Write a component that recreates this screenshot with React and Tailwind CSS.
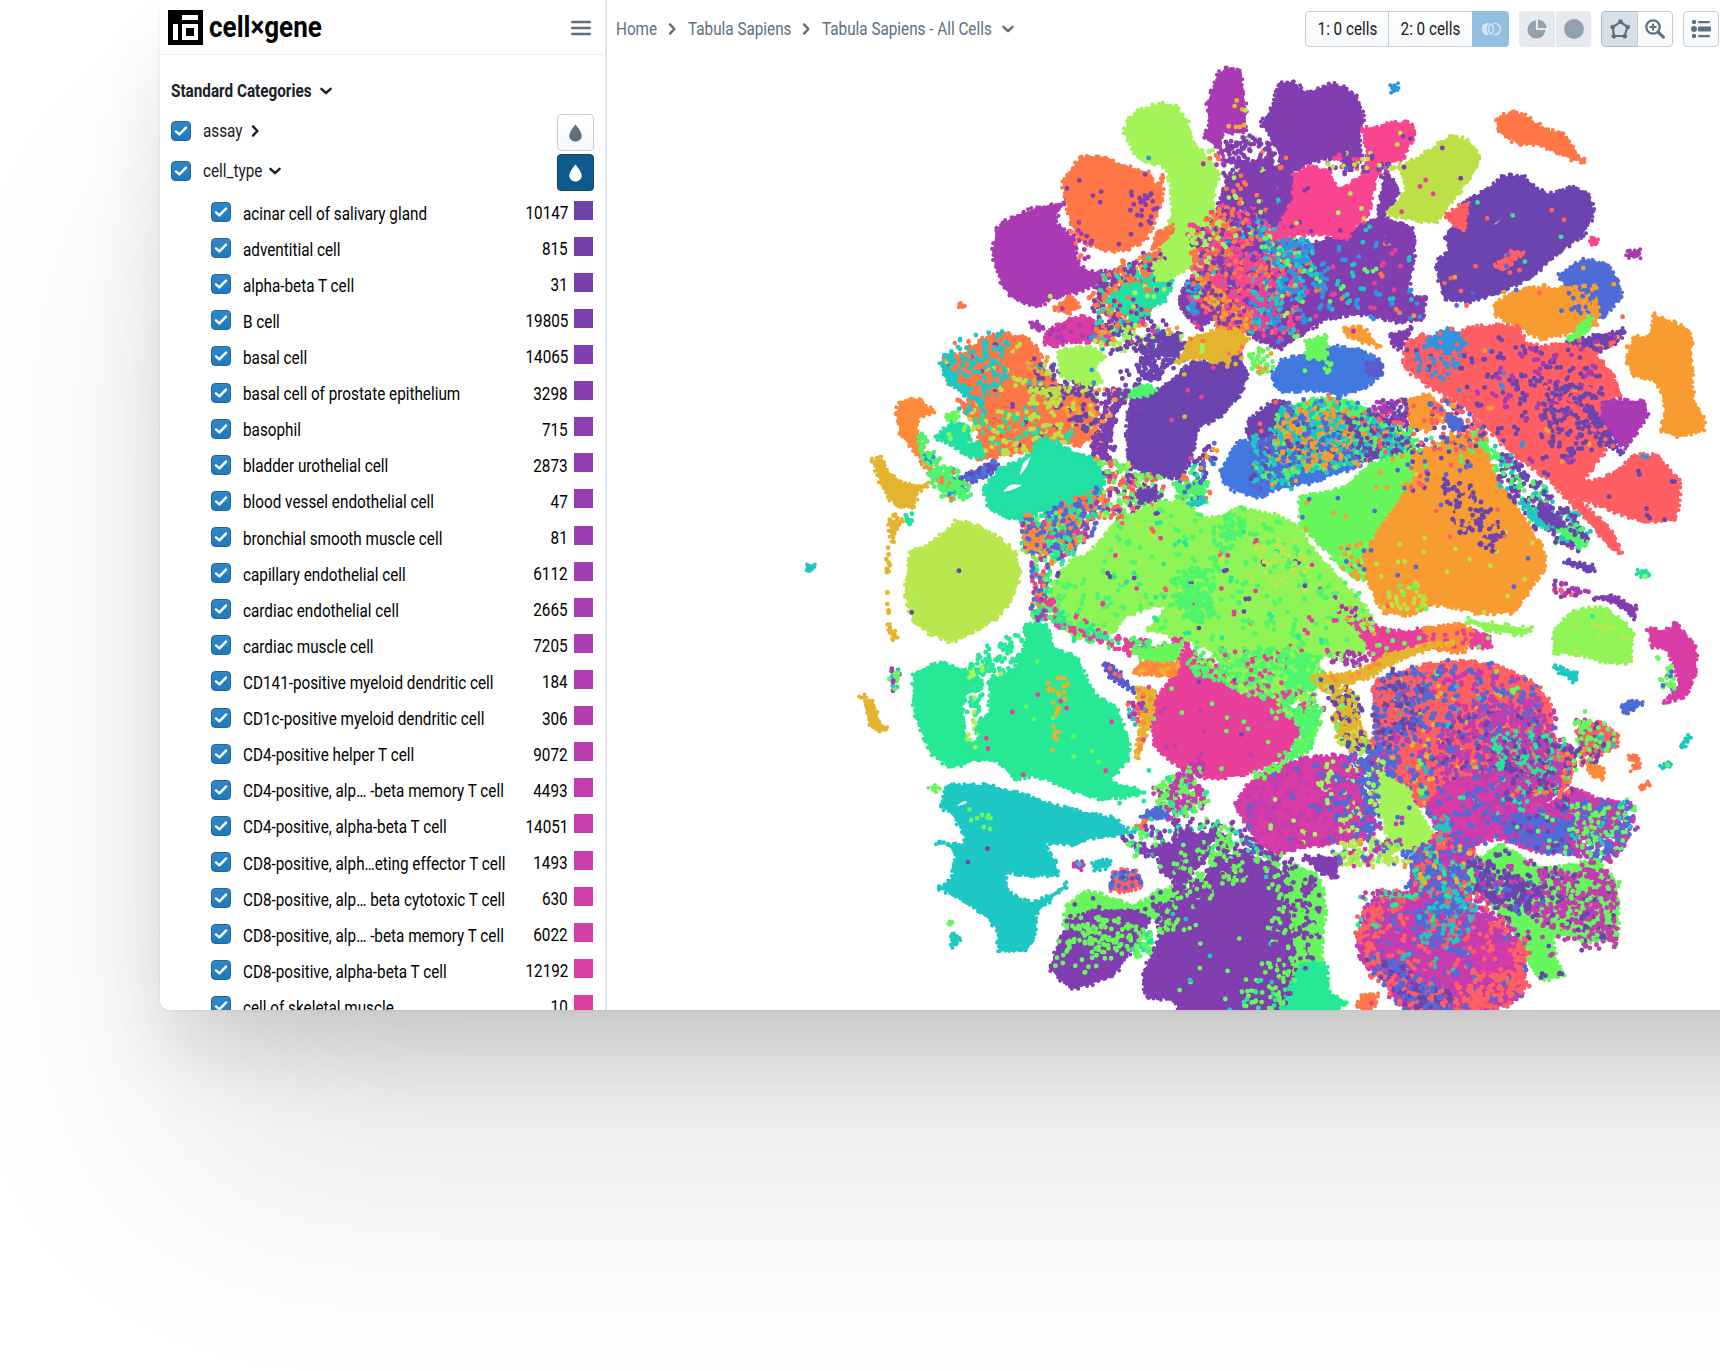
import React from "react";

const C = {
  v: "#803eb0", d: "#6b44b0", m: "#a93ab3", k: "#f94590", p: "#e8409a", f: "#c43cae", h: "#d93ca5",
  l: "#a3f459", g: "#8ff557", n: "#67f75c", q: "#4ef56c", y: "#b9e84e", c: "#bde046", o: "#f89b31", s: "#ff8a3a",
  x: "#ff7747", r: "#ff5e63", t: "#1dc7c4", e: "#26e895", w: "#20e0a3", b: "#4f6bd8", u: "#4179e0",
  i: "#2f95e0", a: "#e4b42f", j: "#5a5bcf", z: "#ffffff",
};

/* Each tile: [originX, originY, shapes]; units are thirds of a pixel.
   Shape: [base colour or "", outline, "colour+count" speckles]. */
const TILES = [
  [1280, 50, [
    ["v", "-120,340 -60,330 40,370 60,480 -60,500 -150,450", ""],
    ["v", "-5,100 40,90 80,120 150,98 190,105 235,140 255,200 245,260 250,330 210,365 165,330 90,345 30,380 -10,420 -5,330 -30,270 -60,220 -30,170", ""],
    ["v", "-120,480 -120,370 -60,380 0,400 60,580 300,500 400,540 405,640 390,730 440,740 430,810 350,820 250,800 150,810 60,860 0,900 -90,860 -170,790 -240,840 -300,780 -300,720 -250,650 -240,560 -190,490", "i70 t45 p40 n16 x16"],
    ["", "-210,480 -120,440 -40,470 40,560 70,700 30,850 -60,860 -160,800 -270,780 -260,650 -200,560", "k190 x100 v130 i70 n24 t30 l20"],
    ["", "-80,520 60,560 150,680 150,740 20,740 -60,700", "i70 t20 n14"],
    ["", "-190,600 -60,600 0,700 -80,760 -220,720", "k110 x30 v20"],
    ["", "-90,720 -10,740 0,830 -80,830", "t30 p26 i10"],
    ["x", "-250,680 -200,700 -140,760 -80,790 -110,850 -190,840 -210,760", "v30 o24 a12 k8"],
    ["k", "245,235 300,225 330,212 390,215 412,245 370,330 330,340 290,400 270,500 230,530 200,570 130,560 60,560 -20,560 30,450 40,370 90,345 150,360 180,410 240,370 260,320", "v8 l4 c4"],
    ["", "130,310 330,320 330,370 160,370", "v22 c12 b4 k16"],
    ["v", "310,370 350,390 360,430 310,520 290,500", ""],
    ["v", "310,510 400,535 400,590 320,580", ""],
    ["", "-130,250 0,300 10,480 -120,500 -170,330", "v80 l8 x6"],
    ["c", "330,350 380,335 440,300 510,255 570,270 600,320 580,380 540,430 500,480 470,520 400,515 320,490 370,420 360,370", "v3 p4"],
    ["x", "648,205 700,180 750,200 800,235 850,245 915,335 880,335 820,310 770,290 710,285 650,240", ""],
    ["d", "500,550 550,450 610,420 670,375 730,375 800,425 880,408 930,430 945,490 910,560 830,620 750,690 650,735 570,760 490,745 465,640 500,600 490,560", "r8 e4"],
    ["r", "500,500 560,460 550,540", ""], ["r", "640,650 690,600 730,610 680,660", "b2"],
    ["z", "640,525 662,508 650,520", ""],
    ["k", "925,572 945,562 955,578 940,585", ""], ["m", "1045,605 1080,603 1078,620 1045,620", ""],
    ["i", "330,108 350,103 352,120 338,126", ""],
    ["b", "835,670 910,625 980,640 1020,690 1025,740 970,805 900,760 850,710", "o6"],
    ["o", "650,750 740,710 850,710 940,730 960,780 950,830 860,855 790,870 720,840 640,795", ""],
    ["", "860,700 950,700 950,800 870,780", "b18 o18"],
    ["n", "860,870 930,800 930,830 880,885", ""],
    ["o", "1120,790 1230,840 1240,920 1245,1040 1275,1100 1270,1145 1190,1165 1140,1140 1150,1080 1125,1000 1060,980 1035,930 1060,860 1110,850", ""],
    ["d", "830,885 950,850 1035,840 1020,875 960,910 860,915", "r8 o6 m6"],
    ["r", "375,880 430,850 500,870 560,830 650,820 720,830 750,880 860,880 940,900 1000,970 1025,1040 970,1060 970,1120 980,1200 940,1260 920,1290 1000,1265 1060,1215 1130,1215 1200,1290 1200,1370 1180,1415 1090,1420 1000,1390 900,1350 850,1340 800,1290 700,1220 610,1130 530,1060 440,1010 370,950", "d40 m12 i6 o8"],
    ["", "640,900 940,920 970,1200 860,1230 700,1080", "d90 m40"],
    ["", "780,1000 920,1000 960,1160 840,1140", "d56 r40"],
    ["i", "440,870 510,828 560,880 500,920", "r4"], ["", "400,880 540,900 520,980 430,990", "i34 r10"],
    ["r", "850,1340 900,1350 1000,1440 1025,1510 990,1500 930,1430", ""],
    ["m", "970,1050 1090,1050 1105,1100 1040,1195 1000,1170 960,1110", ""],
    ["d", "920,1080 960,1100 1030,1210 970,1180", "r4"],
    ["u", "-30,980 0,930 60,910 150,885 240,895 300,930 310,975 250,1020 180,1040 100,1025 0,1030", ""],
    ["j", "260,940 300,935 305,975 265,975", ""],
    ["n", "75,870 140,855 140,920 80,930", ""],
    ["", "60,910 160,910 160,980 70,960", "n12"],
    ["o", "190,830 250,830 300,890 240,880 200,860", "m1"],
    ["v", "330,850 400,830 360,900 330,880", ""],
    ["u", "-180,1260 -120,1170 60,1180 230,1200 240,1250 100,1300 0,1320 -60,1345 -130,1330 -175,1300", ""],
    ["d", "-95,1110 -20,1050 40,1070 40,1170 -40,1190 -100,1160", "r3"],
    ["q", "-10,1090 90,1045 200,1045 300,1090 400,1180 380,1230 250,1230 150,1260 -10,1260", "t150 o60 b80 d70 x16"],
    ["", "0,1080 200,1100 230,1230 40,1260", "o90 t60 b40"],
    ["", "200,1080 400,1080 420,1230 250,1220", "d80 t34 q30 r12"],
    ["", "-90,1160 60,1160 60,1300 -90,1320", "t34 q20 b50 o12 d14"],
    ["n", "60,1340 180,1310 270,1240 400,1200 420,1290 300,1440 250,1590 190,1560 110,1480 60,1430", "o14 b8"],
    ["q", "570,1150 610,1140 640,1220 600,1230", ""],
    ["o", "400,1210 540,1150 620,1210 660,1290 730,1390 790,1490 800,1550 740,1640 700,1690 600,1695 470,1670 400,1700 310,1690 270,1620 240,1540 300,1430 360,1340 400,1280", "b8 c24 r6"],
    ["", "480,1290 580,1320 670,1440 640,1500 540,1450", "d70 o16"],
    ["", "370,1180 600,1160 560,1260 400,1330", "b12 r16 q10 d12"],
    ["", "180,1480 280,1480 250,1600 190,1560", "o20 b6 g10"],
    ["", "320,1600 420,1600 440,1680 340,1690", "c26 n8"],
    ["o", "370,1050 450,1030 500,1090 450,1140 390,1130", "r5"],
    ["", "280,1050 380,1050 380,1120 290,1110", "m24 d24 r12"],
    ["", "450,1040 600,1100 620,1180 470,1160", "r40 d14 b14 o14"],
    ["b", "500,1090 545,1110 530,1140 505,1125", ""],
    ["", "650,1190 760,1290 920,1440 890,1500 780,1430 700,1350 650,1280", "d110 t60 q46 m20"],
    ["t", "720,1350 800,1400 830,1430 770,1430", ""], ["d", "780,1360 850,1420 840,1435 780,1400", ""],
    ["", "380,800 560,640 1040,800 1100,1040 1000,880 840,860 700,800", "r4 o7 b4"],
  ]],
  [840, 50, [
    ["m", "1130,70 1165,50 1205,65 1215,120 1222,180 1220,245 1185,255 1150,250 1155,340 1130,300 1085,260 1100,230 1098,160", "a7 l1"],
    ["", "1150,270 1260,270 1320,400 1280,430 1170,350", "v50"],
    ["v", "1160,380 1210,360 1270,400 1260,460 1200,480 1130,480", "x12 l6"],
    ["l", "860,205 900,175 960,155 1010,165 1045,210 1062,270 1090,300 1140,370 1125,440 1130,500 1165,540 1100,530 1080,600 1050,650 1010,680 960,700 940,650 960,560 985,510 990,440 975,360 920,340 880,310 850,250", "i2"],
    ["", "1050,290 1130,300 1140,350 1080,350", "l14 x4 m3"],
    ["", "1110,480 1200,470 1170,600 1050,680 1040,560", "x50 v40 k40 l24"],
    ["m", "470,530 520,495 600,465 680,455 650,510 700,560 720,640 760,660 830,660 790,700 720,730 650,745 590,775 530,755 490,720 460,650 455,590", "l1"],
    ["x", "720,320 780,315 850,340 930,365 950,400 972,370 970,450 950,510 920,570 860,605 790,605 730,580 690,530 672,450 665,390", "v12"],
    ["", "870,420 960,430 930,540 860,500", "v20"],
    ["", "680,490 740,530 760,650 700,600", "m18 x5"],
    ["x", "930,590 950,540 1000,530 990,560 950,595", ""],
    ["x", "645,775 690,740 715,770 680,790", "m1"], ["x", "358,765 370,762 372,772 360,773", ""],
    ["m", "570,815 600,820 610,840 580,835", ""],
    ["h", "610,880 620,840 690,800 750,800 830,850 780,880 700,880 640,895", "m14"],
    ["", "760,720 800,690 850,640 940,610 980,640 960,740 900,820 830,860 780,880", "v190 x160 w60 o30"],
    ["w", "800,750 860,700 920,690 950,650 1000,690 980,750 900,800 850,790", "v12 x8 l8"],
    ["l", "945,640 990,640 985,690 950,690", ""],
    ["", "760,860 930,800 1040,860 1040,930 900,900 800,900", "l40 d40 o10 i8 p6"],
    ["x", "310,920 370,905 430,860 480,845 560,860 600,900 620,960 680,1010 740,1010 780,1070 770,1150 720,1190 650,1175 560,1210 470,1225 410,1230 410,1150 370,1080 380,1035 320,1000", "c34 v24 t24"],
    ["t", "305,935 380,990 385,1040 320,1000", ""],
    ["", "320,900 500,850 490,1010 370,1100 370,1030", "t90 x50"],
    ["", "560,940 640,930 780,1010 770,1140 640,1080 580,1020", "d90 c20 o20"],
    ["", "560,1010 660,1010 650,1070 590,1070", "c44"],
    ["", "390,1110 560,1080 720,1160 520,1220 430,1180", "c50 w30 x30"],
    ["l", "655,900 720,885 760,890 800,920 770,950 785,1000 740,1005 660,980", "i2"],
    ["", "910,870 980,850 1040,880 990,950 940,990 900,970", "d140"],
    ["", "840,960 920,940 940,1010 860,1010", "d14"],
    ["d", "870,1040 940,1020 1010,970 1060,930 1130,930 1200,910 1225,980 1200,1040 1150,1100 1080,1140 1060,1220 1020,1285 930,1280 870,1250 855,1170", "p5 v8 a2"],
    ["q", "845,1030 920,1005 945,1020 920,1035 850,1045", ""],
    ["a", "1050,860 1120,840 1190,840 1230,870 1200,910 1130,940 1070,930 1010,940", "x5 l4"],
    ["", "1140,930 1210,910 1190,960 1150,960", "a8"],
    ["", "800,1020 860,1020 830,1080 820,1160 800,1230 750,1210 790,1100", "v110 o16 d20"],
    ["", "1230,900 1290,890 1300,960 1240,970", "n34 o6"],
    ["s", "165,1090 180,1050 240,1045 285,1090 240,1110 240,1150 270,1230 310,1310 275,1290 230,1220 180,1160", ""],
    ["a", "95,1230 125,1220 150,1260 185,1290 265,1305 240,1330 220,1375 165,1370 120,1310", ""],
    ["w", "285,1160 340,1110 390,1130 400,1190 380,1210 330,1190", "g6"],
    ["n", "315,1090 350,1090 350,1110 320,1105", ""],
    ["w", "360,1190 420,1180 430,1220 380,1215", ""],
    ["", "240,1160 290,1240 350,1260 390,1330 340,1345 290,1310 250,1220", "q130 i12 x8"],
    ["j", "360,1280 460,1230 480,1260 400,1300", "u10 d6"],
    ["w", "430,1310 480,1250 560,1215 600,1160 640,1170 700,1200 760,1220 800,1280 780,1340 700,1390 650,1400 600,1390 560,1420 480,1400 440,1370", ""],
    ["z", "540,1275 550,1240 572,1220 560,1250", ""], ["z", "490,1325 510,1305 545,1305 520,1318", ""],
    ["", "640,1380 760,1320 800,1350 780,1420 700,1480 620,1460", "b60 x44 w20 m16 s20"],
    ["", "560,1440 700,1400 720,1500 600,1520", "b34 s34 x10"],
    ["", "790,1230 940,1270 980,1400 850,1440 790,1380", "r60 v50 n80 l20"],
    ["d", "890,1320 950,1310 950,1350 900,1360", ""],
    ["", "1000,1310 1080,1270 1110,1320 1080,1370 1010,1350", "q60 b8 x6"],
    ["", "1060,1240 1130,1160 1130,1240 1080,1300", "d20 b12 o8 w6"],
    ["t", "950,1370 1095,1345 1090,1365 1000,1395", ""],
    ["", "140,1390 190,1400 170,1430 150,1430", "a8"], ["", "190,1390 220,1380 215,1430", "w9"],
    ["", "860,1430 1000,1380 1060,1420 900,1500", "n44 l20 v8 p6"],
  ]],
  [780, 520, [
    ["t", "78,135 100,133 100,147 82,148", ""],
    ["a", "330,10 370,0 345,40 340,70 333,50", ""],
    ["", "318,80 330,90 326,290 318,290", "a12"],
    ["a", "325,310 350,350 340,358 325,330", ""],
    ["y", "390,90 460,60 530,0 580,10 660,50 710,100 725,160 700,240 650,300 570,345 520,370 460,350 400,310 370,220 380,140", "d2 l1"],
    ["", "330,440 370,440 350,510 330,510", "n10 m6 t6"],
    ["a", "243,525 285,545 300,600 325,630 300,637 265,615", ""],
    ["e", "400,460 480,425 590,460 560,540 550,590 570,660 620,710 520,745 450,700 400,580", ""],
    ["e", "740,310 800,310 830,380 890,410 950,520 1010,560 1050,660 1050,720 1000,780 1070,800 1070,830 960,840 880,820 770,775 700,780 650,730 590,720 590,600 620,580 630,480 700,440 730,370", "p9 n8"],
    ["", "540,460 740,320 720,470 600,500 620,720 550,700 570,560", "e120 l16"],
    ["", "790,470 870,480 850,560 830,690 810,690 820,560", "a26"],
    ["", "740,0 900,-20 890,80 800,160 810,300 750,300 760,130 730,60", "s40 b60 e80 n50 m24 p24"],
    ["s", "725,30 800,30 780,90 740,90", "b8"],
    ["g", "800,240 820,180 870,120 930,90 1000,10 1090,-40 1200,-60 1290,-10 1380,-40 1500,-15 1560,20 1600,80 1680,170 1780,290 1750,400 1620,420 1600,510 1500,560 1380,500 1300,400 1200,360 1100,330 1150,260 1050,290 1000,340 900,360 830,310", "q190 e24 p22 d12 r8 y24"],
    ["", "1180,150 1280,150 1300,300 1210,290", "q100"],
    ["", "1350,-20 1290,60 1340,90 1400,20", "q50"],
    ["", "1420,80 1560,60 1590,160 1480,200", "y50"],
    ["", "800,200 860,300 1000,350 1200,370 1180,410 1050,390 900,350 800,290", "p70 q60 e20"],
    ["n", "1060,390 1210,370 1180,430 1100,430", ""],
    ["p", "1110,560 1170,470 1220,370 1270,420 1400,480 1520,560 1560,640 1510,720 1400,765 1290,780 1190,740 1120,680", "n14 f8 v3"],
    ["", "1230,410 1560,390 1630,500 1590,640 1500,570 1380,520 1250,460", "q240 p70 g90"],
    ["q", "1520,400 1620,410 1600,510 1530,500", "g10"],
    ["", "1560,560 1610,600 1590,670 1500,740 1560,660", "q80 n30"],
    ["s", "1055,455 1080,425 1200,430 1180,470 1070,468", "a8"],
    ["j", "970,430 1000,430 1065,510 1060,520 985,475", "r3"],
    ["a", "1065,500 1130,510 1110,620 1075,720 1065,690 1080,600", "s8 p4"],
    ["", "1040,550 1090,550 1080,620 1050,600", "t8 r8 m12"],
    ["", "1130,790 1220,760 1280,830 1240,890 1140,880", "f80 n70 e16"],
    ["b", "1085,890 1130,860 1160,885 1110,900", ""], ["x", "1060,925 1100,900 1090,925 1065,932", ""],
    ["", "1180,780 1260,700 1270,760 1220,790", "f30 n6"],
    ["t", "500,795 620,790 720,815 860,860 1000,890 1055,940 1000,955 930,960 880,980 800,975 830,1020 830,1070 720,1070 680,1060 700,1120 760,1140 860,1095 820,1140 770,1190 775,1230 740,1295 655,1295 640,1220 540,1140 470,1105 510,1070 520,1000 470,965 550,965 515,890 480,860", "v2"],
    ["z", "530,858 555,842 560,850", ""],
    ["", "560,850 640,850 640,930 590,930", "n9"],
    ["n", "450,800 475,800 470,812", ""], ["t", "512,1260 525,1240 538,1260 520,1280", ""], ["n", "508,1208 514,1208 512,1214", ""],
    ["t", "940,1030 990,1020 980,1040 945,1048", ""], ["f", "880,1035 910,1025 905,1048 885,1045", "t2"],
    ["r", "1000,1050 1070,1050 1090,1100 1030,1120 985,1110", "b22 t4 d5"],
    ["", "1040,940 1280,900 1500,1000 1470,1050 1250,1000 1080,1010", "v110 n70 e24 t8"],
    ["n", "850,1220 860,1150 930,1110 1060,1150 1130,1110 1210,1090 1220,1120 1130,1200 1060,1180 930,1190", "v10"],
    ["v", "870,1200 930,1170 1060,1165 1110,1200 1060,1290 1000,1370 880,1410 810,1350 830,1270", "n20"],
    ["", "860,1220 1080,1200 1020,1300 870,1300", "n66"],
    ["", "1060,1260 1100,1210 1130,1290 1070,1310", "n30 e14"],
    ["v", "1080,990 1190,960 1200,925 1290,950 1270,1030 1200,1085 1140,1060 1130,1010", "n4"],
    ["n", "1510,1040 1610,1060 1640,1150 1630,1300 1650,1410 1700,1450 1650,1480 1480,1480 1500,1300", "v50"],
    ["v", "1140,1160 1260,1080 1320,1000 1420,1010 1500,1050 1530,1180 1540,1300 1500,1480 1210,1480 1180,1445 1100,1435 1085,1360 1130,1260", "n12 t8"],
    ["", "1260,940 1420,980 1560,1060 1330,1100 1180,1250 1110,1190", "n90 v90"],
    ["e", "1560,1330 1640,1330 1650,1410 1700,1450 1640,1480 1500,1480", ""],
    ["", "1480,1060 1600,1080 1620,1200 1580,1340 1500,1470 1460,1470", "v70 n60"],
    ["", "1380,1380 1520,1380 1500,1470 1380,1460", "n20 e10"],
    ["", "1000,860 1120,780 1080,700 1120,960", "e10"],
    ["", "1390,900 1340,900 1400,990 1500,1020 1480,990", "v24 b8 e6"],
  ]],
  [1220, 520, [
    ["h", "45,860 80,790 150,740 270,710 380,710 440,830 430,960 300,980 170,1000 100,950", "f180 b16 l8"],
    ["", "280,720 440,730 450,960 380,960", "l34 b34 f20"],
    ["", "100,760 200,715 200,735 130,780", "n20"],
    ["p", "380,290 450,310 540,330 620,320 760,330 815,350 810,390 720,380 600,380 530,400 460,430 430,360", "n14"],
    ["s", "610,320 720,310 760,330 730,400 640,390 620,350", "p14"],
    ["a", "300,460 400,450 500,400 620,370 700,370 540,425 440,480 350,500 310,490", "s8"],
    ["g", "740,300 830,307 935,325 905,348 800,335", ""],
    ["", "330,230 450,290 460,340 380,300", "g30 m14 o6"],
    ["", "330,390 440,400 420,440 340,430", "m30 g8"],
    ["", "270,480 400,520 420,620 460,700 380,680 340,600 340,530", "a130 n30 d60 c30"],
    ["r", "460,490 550,450 640,425 750,420 850,440 950,490 995,550 1000,640 1060,720 1050,790 960,850 830,860 700,860 600,860 520,820 440,740 460,620", "b330 f120 a90 n20 t20 r60"],
    ["", "460,490 620,440 620,600 480,700", "d60 b50 r50"],
    ["", "720,560 980,540 1040,800 900,860 700,800 640,720", "f300 d60 b40 r50"],
    ["", "820,640 1000,640 980,780 850,760", "e90 f50"],
    ["h", "620,850 700,780 860,760 960,850 1060,800 1130,830 1200,850 1150,930 960,1000 830,960 700,1010 640,920", "b110 f130 e20"],
    ["", "850,660 1060,680 1060,860 850,860", "e30 f80 d60 x12"],
    ["", "390,700 500,690 520,800 480,900 440,960 430,800", "b170 f30 l24 d10"],
    ["b", "820,890 960,880 1060,920 1080,1000 960,1000 860,940", "f30 d20 n10"],
    ["", "1060,850 1230,850 1245,930 1200,1000 1150,1020 1060,1010", "f130 b130 n80 t10"],
    ["l", "480,760 560,800 600,870 650,960 590,985 510,980 480,870", "b3 f3"],
    ["", "450,780 500,780 500,900 450,880", "l16"],
    ["", "640,890 690,900 680,990 640,960", "t30 r10"],
    ["", "400,960 620,980 640,1020 540,1030 400,1040 300,1060", "y60 l30 f30 b20 n14 o6"],
    ["v", "250,1010 350,1010 350,1080 300,1060", ""],
    ["f", "580,1000 640,960 760,980 770,1110 700,1160 570,1110", "b90 a20 t24 e24 r30"],
    ["n", "780,1010 840,970 900,1000 980,1040 1130,1020 1190,1090 1200,1170 1190,1260 1100,1270 1010,1250 1010,1300 1030,1370 960,1380 900,1300 860,1210 780,1130 740,1050", "f50 d30"],
    ["", "960,1050 1190,1080 1190,1260 1090,1270 940,1200", "f200 d40 n60"],
    ["", "740,1020 850,1050 960,1110 960,1180 860,1160 780,1130", "d130 f30 b20"],
    ["f", "460,1130 540,1110 620,1130 750,1170 830,1210 900,1260 915,1330 910,1430 800,1475 560,1475 500,1400 430,1330 410,1240", "r110 b100 t20 f60"],
    ["", "740,1120 800,1150 900,1260 860,1290 740,1200", "f50 r20"],
    ["", "600,1100 760,1150 740,1260 600,1260", "t50 b70 r30 e10 f20"],
    ["", "410,1230 460,1140 560,1120 480,1200 470,1380 430,1330", "r70 e10 f20"],
    ["", "440,1310 600,1370 720,1470 570,1475 500,1400", "b70 d60 r50"],
    ["", "740,1380 920,1260 910,1430 800,1475 700,1470", "r130"],
    ["h", "740,1280 860,1270 880,1340 800,1360", "f20 r10"],
    ["", "410,1120 560,1110 600,1130 460,1150", "e12 f14"],
    ["x", "415,1460 425,1430 470,1425 465,1450 440,1480", "p1"],
    ["g", "1000,330 1060,270 1150,260 1240,330 1230,430 1150,430 1080,410 1000,400", "y14 e1"],
    ["v", "1120,235 1180,225 1250,260 1245,300 1190,260", ""],
    ["h", "1285,325 1340,325 1370,305 1430,380 1430,460 1400,530 1330,550 1370,490 1340,400 1290,380", ""],
    ["", "1310,410 1350,410 1370,520 1330,510", "n16 b5"],
    ["r", "1070,630 1140,600 1195,640 1190,685 1130,710 1080,690", "n16 d8 t6"],
    ["", "1060,600 1110,600 1100,680 1065,680", "n18 f8"],
    ["", "1010,680 1130,690 1140,740 1050,740", "d34 r16 s10"],
    ["s", "1100,735 1145,740 1150,775 1120,770", ""],
    ["b", "1205,560 1230,540 1265,550 1240,570 1210,580", ""],
    ["x", "1225,710 1250,710 1260,740 1235,750 1245,730", ""], ["x", "1262,800 1288,785 1285,795 1268,805", ""],
    ["t", "1380,675 1405,648 1408,655 1388,680", ""], ["t", "1322,740 1350,728 1348,742 1330,745", "n1"],
    ["t", "1000,437 1070,460 1065,485 1020,455", ""], ["w", "1250,158 1275,148 1292,162 1275,172", "l1"],
    ["d", "1040,120 1120,140 1115,155 1045,130", ""], ["q", "1010,30 1060,20 1100,75 1080,85 1030,50", "d3"],
    ["", "990,180 1110,210 1040,235 1000,220", "m16 r6 v8"],
    ["", "1020,610 1060,560 1220,610 1050,780", "n12"],
  ]],
];

function rng(seed) {
  let s = seed >>> 0;
  return () => {
    s = (s + 0x6d2b79f5) >>> 0;
    let t = Math.imul(s ^ (s >>> 15), 1 | s);
    t = (t + Math.imul(t ^ (t >>> 7), 61 | t)) ^ t;
    return ((t ^ (t >>> 14)) >>> 0) / 4294967296;
  };
}

/* Closed cardinal-spline outline, sampled densely and inset along its normal. */
function smooth(pts, inset) {
  const out = [];
  const n = pts.length;
  const s = 0.32;
  let area = 0;
  for (let i = 0; i < n; i++) {
    const q = pts[(i + 1) % n];
    area += pts[i][0] * q[1] - q[0] * pts[i][1];
  }
  const amount = Math.abs(area) < 500 ? 0 : inset;
  for (let i = 0; i < n; i++) {
    const [a, b, c, d] = [pts[(i + n - 1) % n], pts[i], pts[(i + 1) % n], pts[(i + 2) % n]];
    const len = Math.hypot(c[0] - b[0], c[1] - b[1]) || 1;
    const nx = ((b[1] - c[1]) / len) * Math.sign(area) * amount;
    const ny = ((c[0] - b[0]) / len) * Math.sign(area) * amount;
    const steps = Math.max(2, Math.round(len / 3));
    for (let k = 0; k < steps; k++) {
      const t = k / steps;
      const [t2, t3] = [t * t, t * t * t];
      const at = (j) =>
        (2 * t3 - 3 * t2 + 1) * b[j] + (t3 - 2 * t2 + t) * s * (c[j] - a[j]) + (3 * t2 - 2 * t3) * c[j] + (t3 - t2) * s * (d[j] - b[j]);
      out.push([at(0) + nx, at(1) + ny]);
    }
  }
  return out;
}

function inside(x, y, poly) {
  let hit = false;
  for (let i = 0, j = poly.length - 1; i < poly.length; j = i++) {
    const [xi, yi] = poly[i];
    const [xj, yj] = poly[j];
    if (yi > y !== yj > y && x < ((xj - xi) * (y - yi)) / (yj - yi) + xi) hit = !hit;
  }
  return hit;
}

const f1 = (v) => v.toFixed(1);

function buildLayers() {
  const layers = [];
  const rand = rng(20240);
  for (const [ox, oy, shapes] of TILES) {
    for (const [base, outline, speckle] of shapes) {
      const raw = outline.split(" ").map((p) => {
        const [x, y] = p.split(",").map(Number);
        return [ox + x / 3, oy + y / 3];
      });
      const poly = smooth(raw, base ? 2 : 0);
      if (base) {
        let dots = "";
        if (base !== "z") {
          for (const [x, y] of poly) dots += `M${f1(x + (rand() - 0.5) * 3.4)} ${f1(y + (rand() - 0.5) * 3.4)}h0`;
        }
        layers.push({ fill: C[base], d: "M" + poly.map((p) => f1(p[0]) + " " + f1(p[1])).join("L") + "Z", dots, w: 4 });
      }
      if (speckle) {
        const xs = raw.map((p) => p[0]);
        const ys = raw.map((p) => p[1]);
        const [x0, x1, y0, y1] = [Math.min(...xs), Math.max(...xs), Math.min(...ys), Math.max(...ys)];
        const bag = [];
        for (const part of speckle.split(" ")) for (let i = 0; i < +part.slice(1); i++) bag.push(part[0]);
        for (let i = bag.length - 1; i > 0; i--) {
          const j = Math.floor(rand() * (i + 1));
          [bag[i], bag[j]] = [bag[j], bag[i]];
        }
        const dense = bag.length > 60;
        const spread = dense ? 8 : 2;
        const groups = [];
        bag.forEach((col, idx) => {
          const slot = Math.floor((idx * 4) / bag.length);
          for (let tries = 0; tries < 40; tries++) {
            const x = x0 + rand() * (x1 - x0);
            const y = y0 + rand() * (y1 - y0);
            if (inside(x, y, poly)) {
              const key = slot + col;
              let g = groups.find((q) => q.key === key);
              if (!g) groups.push((g = { key, col, dots: "" }));
              const [px, py] = [x + (rand() - 0.5) * spread, y + (rand() - 0.5) * spread];
              g.dots += `M${f1(px)} ${f1(py)}h0`;
              if (dense && rand() < 0.55) g.dots += `M${f1(px + (rand() - 0.5) * 8)} ${f1(py + (rand() - 0.5) * 8)}h0`;
              break;
            }
          }
        });
        groups.sort((a, b) => (a.key[0] < b.key[0] ? -1 : a.key[0] > b.key[0] ? 1 : 0));
        for (const g of groups) layers.push({ fill: C[g.col], dots: g.dots, w: 4.9 });
      }
    }
  }
  return layers;
}

const LAYERS = buildLayers();

function Scatter() {
  return (
    <svg className="block h-[954px] w-[1113px]" viewBox="607 56 1113 954">
      {LAYERS.map((l, i) => (
        <g key={i}>
          {l.d && <path d={l.d} fill={l.fill} />}
          {l.dots && <path d={l.dots} fill="none" stroke={l.fill} strokeWidth={l.w} strokeLinecap="round" />}
        </g>
      ))}
    </svg>
  );
}

/* Cyclical rainbow in cubehelix space. */
function rainbow(t) {
  const ts = Math.abs(t - 0.5);
  const h = ((360 * t - 100 + 120) * Math.PI) / 180;
  const s = 1.5 - 1.5 * ts;
  const l = 0.8 - 0.9 * ts;
  const a = s * l * (1 - l);
  const [c, n] = [Math.cos(h), Math.sin(h)];
  const ch = (p, q) => Math.round(255 * Math.max(0, Math.min(1, l + a * (p * c + q * n))));
  return `rgb(${ch(-0.14861, 1.78277)}, ${ch(-0.29227, -0.90649)}, ${ch(1.97294, 0)})`;
}

const CELLS = [
  ["acinar cell of salivary gland", 10147], ["adventitial cell", 815], ["alpha-beta T cell", 31], ["B cell", 19805],
  ["basal cell", 14065], ["basal cell of prostate epithelium", 3298], ["basophil", 715], ["bladder urothelial cell", 2873],
  ["blood vessel endothelial cell", 47], ["bronchial smooth muscle cell", 81], ["capillary endothelial cell", 6112],
  ["cardiac endothelial cell", 2665], ["cardiac muscle cell", 7205], ["CD141-positive myeloid dendritic cell", 184],
  ["CD1c-positive myeloid dendritic cell", 306], ["CD4-positive helper T cell", 9072],
  ["CD4-positive, alp… -beta memory T cell", 4493], ["CD4-positive, alpha-beta T cell", 14051],
  ["CD8-positive, alph…eting effector T cell", 1493], ["CD8-positive, alp… beta cytotoxic T cell", 630],
  ["CD8-positive, alp… -beta memory T cell", 6022], ["CD8-positive, alpha-beta T cell", 12192], ["cell of skeletal muscle", 10],
];

const ORIGIN = { left: "origin-left", right: "origin-right", center: "origin-center" };

function Cond({ children, className = "", from = "left" }) {
  return (
    <span className={`inline-block scale-x-[0.868] whitespace-nowrap ${ORIGIN[from]} ${className}`}>
      {children}
    </span>
  );
}

function Check({ className = "" }) {
  return (
    <span className={`flex size-[20px] shrink-0 items-center justify-center rounded-[4px] border border-[#2a6591] bg-linear-to-b from-[#3187c6] to-[#1b7abd] ${className}`}>
      <svg className="size-[18px]" viewBox="0 0 18 18" fill="none" stroke="#fff" strokeWidth="2.4" strokeLinecap="round" strokeLinejoin="round">
        <path d="M4 9.4L7.4 12.4L14 5.6" />
      </svg>
    </span>
  );
}

function Chevron({ dir = "down", className = "" }) {
  return (
    <svg className={`size-[12px] shrink-0 ${className}`} viewBox="0 0 12 12" fill="none" stroke="currentColor" strokeWidth="2.4" strokeLinecap="round" strokeLinejoin="round">
      <path d={dir === "down" ? "M1.4 3.8L6 8.2L10.6 3.8" : "M4 1.4L8.4 6L4 10.6"} />
    </svg>
  );
}

function Drop({ active }) {
  return (
    <span className={`flex size-[37px] items-center justify-center rounded-[4px] border ${active ? "border-[#0d456d] bg-[#0e5a8a] text-white" : "border-[#c8ccd0] bg-linear-to-b from-white to-[#f5f8fa] text-[#5c7080]"}`}>
      <svg className="h-[18px] w-[13px]" viewBox="0 0 13 18" fill="currentColor">
        <path d="M6.5 0.5C6.5 0.5 0.3 7.6 0.3 11.5C0.3 15 3 17.5 6.5 17.5S12.7 15 12.7 11.5C12.7 7.6 6.5 0.5 6.5 0.5Z" />
      </svg>
    </span>
  );
}

function Sidebar() {
  return (
    <aside className="flex h-[1010px] w-[447px] shrink-0 flex-col overflow-hidden rounded-bl-[10px] border-r-2 border-[#dfe5ea] bg-white">
      <div className="flex h-[55px] shrink-0 items-center border-b border-[#eef0f2] pr-[14px] pl-[8px]">
        <svg className="mt-px size-[35px]" viewBox="0 0 35 35">
          <rect width="35" height="35" />
          <g fill="#fff">
            <rect x="14" y="5" width="16" height="5" />
            <rect x="5" y="14" width="5" height="16" />
            <path fillRule="evenodd" d="M14 14H30V30H14ZM18 18V26H26V18Z" />
          </g>
        </svg>
        <Cond className="ml-[6px] text-[30px] leading-[30px] font-bold text-black">cell×gene</Cond>
        <svg className="ml-auto h-[18px] w-[20px]" viewBox="0 0 20 18" stroke="#5c7080" strokeWidth="2.4" strokeLinecap="round">
          <path d="M1.2 4H18.8M1.2 10H18.8M1.2 16H18.8" />
        </svg>
      </div>
      <div className="mt-[24px] flex h-[23px] shrink-0 items-center pl-[11px] font-bold text-[#182026]">
        <Cond className="w-[149px]">Standard Categories</Cond>
        <Chevron className="mt-px" />
      </div>
      <div className="mt-[12px] flex h-[37px] shrink-0 items-center pr-[11px] pl-[11px]">
        <Check className="mb-[4px]" />
        <Cond className="mb-[4px] ml-[12px] w-[46px]">assay</Cond>
        <Chevron dir="right" className="mb-[4px]" />
        <span className="ml-auto"><Drop /></span>
      </div>
      <div className="mt-[3px] flex h-[37px] shrink-0 items-center pr-[11px] pl-[11px]">
        <Check className="mb-[4px]" />
        <Cond className="mb-[4px] ml-[12px] w-[66px]">cell_type</Cond>
        <Chevron className="mb-[4px]" />
        <span className="ml-auto"><Drop active /></span>
      </div>
      <div className="mt-[3px] shrink-0">
        {CELLS.map(([name, count], i) => (
          <div key={i} className="flex h-[36.12px] items-center pr-[12px] pl-[51px] text-black">
            <Check />
            <Cond className="ml-[12px] w-[262px] shrink-0 pt-[3px]">{name}</Cond>
            <span className="flex min-w-0 flex-1 justify-end">
              <Cond from="right" className="pt-[2px]">{count}</Cond>
            </span>
            <span className="mb-[4px] ml-[6px] size-[19px] shrink-0" style={{ background: rainbow(i * 0.0064) }} />
          </div>
        ))}
      </div>
    </aside>
  );
}

function Topbar() {
  const btn = "flex h-[36px] items-center justify-center border border-[#c8ccd0] bg-linear-to-b from-white to-[#f7f9fa]";
  return (
    <div className="flex h-[56px] shrink-0 items-start text-[#5c7080]">
      <nav className="flex h-[58px] items-center pl-[9px]">
        <Cond className="w-[50px]">Home</Cond>
        <Chevron dir="right" className="mr-[10px]" />
        <Cond className="w-[112px]">Tabula Sapiens</Cond>
        <Chevron dir="right" className="mr-[10px]" />
        <Cond className="w-[180px]">Tabula Sapiens - All Cells</Cond>
        <Chevron />
      </nav>
      <div className="mt-[11px] ml-auto flex">
        <div className="flex text-[#182026]">
          <span className={`${btn} w-[84px] rounded-l-[4px]`}><Cond from="center">1: 0 cells</Cond></span>
          <span className={`${btn} -ml-px w-[85px]`}><Cond from="center">2: 0 cells</Cond></span>
          <span className="-ml-px flex h-[36px] w-[37px] items-center justify-center rounded-r-[4px] bg-[#93bfe0]">
            <svg className="h-[14px] w-[20px]" viewBox="0 0 20 14" fill="none" stroke="#d3e5f3" strokeWidth="1.6">
              <path d="M8 1.4C5 0 0.8 2.4 0.8 7S5 14 8 12.6C5 9.5 5 4.5 8 1.4Z" fill="#d3e5f3" stroke="none" />
              <path d="M10 1.8C6.6 4.6 6.6 9.4 10 12.2C13.4 9.4 13.4 4.6 10 1.8Z" />
              <path d="M12.4 1.4C15.6 0.6 19.2 3 19.2 7S15.6 13.4 12.4 12.6" />
            </svg>
          </span>
        </div>
        <div className="ml-[10px] flex text-[#93a1ac]">
          <span className="flex h-[36px] w-[36px] items-center justify-center rounded-l-[4px] bg-[#e6eaee]">
            <svg className="size-[20px]" viewBox="0 0 20 20" fill="currentColor">
              <path d="M9 1.6A9 9 0 1 0 18.4 11H9Z" /><path d="M11 0.5V9H19.4A8.5 8.5 0 0 0 11 0.5Z" />
            </svg>
          </span>
          <span className="ml-px flex h-[36px] w-[35px] items-center justify-center rounded-r-[4px] bg-[#e6eaee]">
            <span className="size-[20px] rounded-full bg-[#93a1ac]" />
          </span>
        </div>
        <div className="ml-[10px] flex">
          <span className="flex h-[36px] w-[37px] items-center justify-center rounded-l-[4px] border border-[#b3bcc4] bg-[#d8e0e7]">
            <svg className="size-[20px]" viewBox="0 0 20 20" fill="currentColor">
              <path d="M10.5 3L17.5 8L14.6 17H4L2.8 8Z" fill="none" stroke="currentColor" strokeWidth="2.2" />
              <circle cx="10.5" cy="2.6" r="2.3" /><circle cx="17.7" cy="8" r="2.3" /><circle cx="14.8" cy="17.2" r="2.3" /><circle cx="3.8" cy="17.2" r="2.3" /><circle cx="2.6" cy="8" r="2.3" />
            </svg>
          </span>
          <span className={`${btn} -ml-px w-[36px] rounded-r-[4px]`}>
            <svg className="size-[20px]" viewBox="0 0 20 20" fill="none" stroke="currentColor" strokeWidth="2.3" strokeLinecap="round">
              <circle cx="8" cy="8" r="6.7" /><path d="M13.2 13.2L18.4 18.2" strokeWidth="3" /><path d="M8 5.2V10.8M5.2 8H10.8" strokeWidth="2" />
            </svg>
          </span>
        </div>
        <span className={`${btn} mr-px ml-[10px] w-[36px] rounded-[4px]`}>
          <svg className="size-[20px]" viewBox="0 0 20 20" fill="currentColor">
            <circle cx="3" cy="3" r="2.2" /><circle cx="3" cy="10" r="3" /><circle cx="3" cy="17" r="2.2" />
            <rect x="7" y="2" width="12" height="2.2" rx="1" /><rect x="7" y="7.6" width="13" height="4.8" rx="1" /><rect x="7" y="16" width="12" height="2.2" rx="1" />
          </svg>
        </span>
      </div>
    </div>
  );
}

export default function App() {
  return (
    <div className="h-[1371px] w-[1720px] overflow-hidden bg-white pl-[160px] font-[Roboto,sans-serif] text-[17.6px] leading-[24px] text-[#182026]">
      <div className="flex h-[1010px] w-[1900px] rounded-[10px] bg-white shadow-[0_0_3px_rgba(0,0,0,0.1),0_50px_80px_-12px_rgba(0,0,0,0.14),0_175px_230px_-20px_rgba(0,0,0,0.11)]">
        <Sidebar />
        <main className="flex w-[1113px] flex-col">
          <Topbar />
          <Scatter />
        </main>
      </div>
    </div>
  );
}
